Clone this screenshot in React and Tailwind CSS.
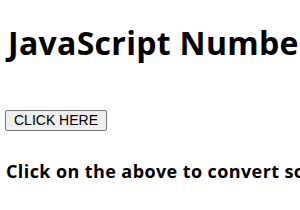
export default function App() {
  return (
    <div className="w-[300px] h-[210px] overflow-hidden bg-white text-black whitespace-nowrap" style={{ fontFamily: '"Open Sans", "Noto Sans", sans-serif' }}>
      <h1 className="pl-[8px] pt-[21px] text-[32px] font-bold leading-[44px] tracking-[0.3px]">JavaScript Number</h1>
      <div className="pl-[5px] pt-[42px]">
        <button className="h-[21px] px-[8px] border border-[#767676] rounded-[2px] bg-[#efefef] text-[14px] leading-[19px] text-black" style={{ fontFamily: '"Liberation Sans", Arial, sans-serif' }}>
          CLICK HERE
        </button>
      </div>
      <p className="pl-[6px] pt-[28px] text-[18px] font-bold leading-[24px] tracking-[0.4px]">Click on the above to convert some</p>
    </div>
  );
}
